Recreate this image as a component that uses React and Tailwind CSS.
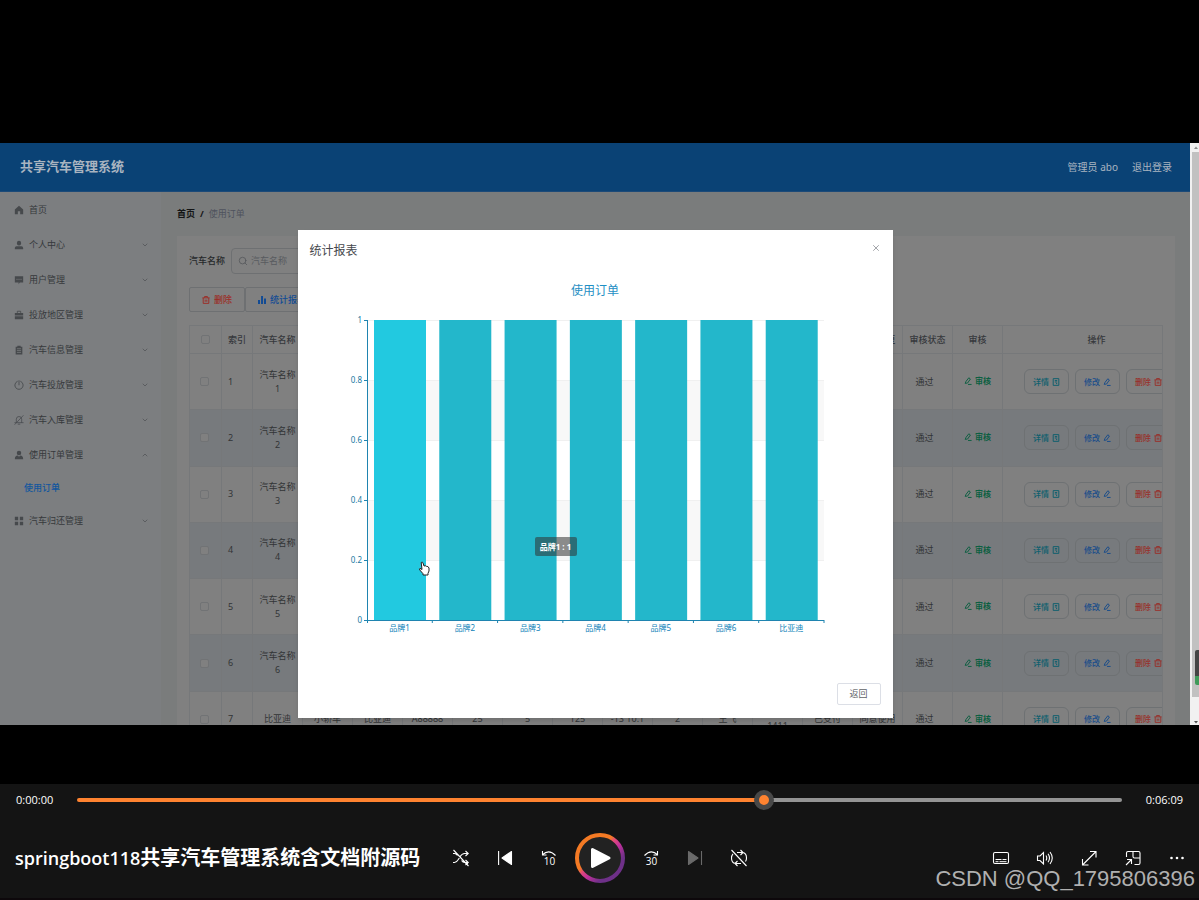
import { ChevronDown, ChevronUp, Search, X } from 'lucide-react';

const menuItems = [
  { label: '首页', icon: 'home' },
  { label: '个人中心', icon: 'user', arrow: true },
  { label: '用户管理', icon: 'chat', arrow: true },
  { label: '投放地区管理', icon: 'bag', arrow: true },
  { label: '汽车信息管理', icon: 'clipboard', arrow: true },
  { label: '汽车投放管理', icon: 'power', arrow: true },
  { label: '汽车入库管理', icon: 'bellOff', arrow: true },
  { label: '使用订单管理', icon: 'person', arrow: true, children: ['使用订单'] },
  { label: '汽车归还管理', icon: 'grid', arrow: true },
];

const menuIcons = {
  home: <path fill="currentColor" d="M6 1 1 5.5V11h3.6V7.500h2.800V11H11V5.500z" />,
  user: (
    <g fill="currentColor">
      <rect x="3.500" y="1" width="5" height="5.500" rx="2.400" />
      <path d="M1 11V9.500Q1 7.500 3 7.500h6q2 0 2 2V11z" />
    </g>
  ),
  chat: (
    <g>
      <path fill="currentColor" d="M1 1.500h10V9H7l-1.500 2V9H1z" />
      <path stroke="#7c7e80" strokeWidth="1.200" strokeDasharray="1.200 1.200" d="M3 5.200h6" />
    </g>
  ),
  bag: (
    <g>
      <path fill="none" stroke="currentColor" d="M4 3.500v-2h4v2" />
      <path fill="currentColor" d="M1 3.500h10v3H1zM1 7.500h10V11H1z" />
    </g>
  ),
  clipboard: (
    <g>
      <path fill="currentColor" d="M2 2h2V.8h4V2h2v9.500H2z" />
      <path stroke="#7c7e80" strokeWidth="0.900" d="M3.500 4.500h5M3.500 6.700h5M3.500 8.900h5" />
    </g>
  ),
  power: (
    <path fill="none" stroke="currentColor" strokeLinecap="round" d="M6 .8v5M4 1.600a5 5 0 1 0 4 0" />
  ),
  bellOff: (
    <g fill="none" stroke="currentColor" strokeWidth="0.900" strokeLinecap="round">
      <path d="M2.800 8.500V5a3.200 3.200 0 0 1 6.400 0v4M1 9.200h10M5 11h2M1 11.300 11 .7" />
    </g>
  ),
  person: (
    <g fill="currentColor">
      <circle cx="6" cy="3.500" r="2.700" />
      <path d="M1 11q0-4 3.500-4.300L6 8.200l1.500-1.500Q11 7 11 11z" />
    </g>
  ),
  grid: <path fill="currentColor" d="M1 1h4v4H1zM7 1h4v4H7zM1 7h4v4H1zM7 7h4v4H7z" />,
};

const columns = ['汽车名称', '', '', '', '', '', '', '', '', '', '', '', '审核回复', '审核状态', '审核'];

const emptyCells = ['', '', '', '', '', '', '', '', '', '', '', ''];

const rows = [
  { id: 1, name: '汽车名称1', cells: emptyCells },
  { id: 2, name: '汽车名称2', cells: emptyCells },
  { id: 3, name: '汽车名称3', cells: emptyCells },
  { id: 4, name: '汽车名称4', cells: emptyCells },
  { id: 5, name: '汽车名称5', cells: emptyCells },
  { id: 6, name: '汽车名称6', cells: emptyCells },
  {
    id: 7,
    name: '比亚迪',
    cells: ['小轿车', '比亚迪', 'A88888', '25', '5', '125', '-13 10:1', '2', '王飞', '\n1411', '已支付', '同意使用'],
  },
];

const chartData = [
  { name: '品牌1', value: 1 },
  { name: '品牌2', value: 1 },
  { name: '品牌3', value: 1 },
  { name: '品牌4', value: 1 },
  { name: '品牌5', value: 1 },
  { name: '品牌6', value: 1 },
  { name: '比亚迪', value: 1 },
];

const ticks = [0, 0.2, 0.4, 0.6, 0.8, 1];

function MenuIcon({ name }) {
  return (
    <svg viewBox="0 0 12 12" className="w-[10px] h-[10px] shrink-0 text-[#46494c]">
      {menuIcons[name]}
    </svg>
  );
}

function EditIcon() {
  return (
    <svg viewBox="0 0 10 10" className="w-2 h-2 shrink-0" fill="none" stroke="currentColor" strokeWidth="1.200">
      <path d="M1.500 8 2.500 5.500 6 1l2 1.500L4.500 7.500zM5 9.300h4.500" />
    </svg>
  );
}

function DocIcon() {
  return (
    <svg viewBox="0 0 10 10" className="w-2 h-2 shrink-0" fill="none" stroke="currentColor" strokeWidth="1.200">
      <path d="M1.500.8h7v8.400h-7zM3.500 3.200h3M3.500 5h3M5 7h1.500" />
    </svg>
  );
}

function TrashIcon() {
  return (
    <svg viewBox="0 0 10 10" className="w-2 h-2 shrink-0" fill="none" stroke="currentColor" strokeWidth="1.200">
      <path d="M.5 2.300h9M3.200 2V.7h3.600V2M1.500 2.500v6.700h7V2.500M4 4.500v2.700M6 4.500v2.700" />
    </svg>
  );
}

function Sidebar() {
  return (
    <nav className="w-[161px] shrink-0 bg-[#7c7e80] text-[9px] text-[#36393c]">
      {menuItems.map((item) => (
        <div key={item.label}>
          <a href="#" className="flex items-center gap-[5px] h-[35px] pl-[14px] pr-3">
            <MenuIcon name={item.icon} />
            <span className="flex-1">{item.label}</span>
            {item.arrow &&
              (item.children ? (
                <ChevronUp className="w-2 h-2 text-[#4a4d50]" />
              ) : (
                <ChevronDown className="w-2 h-2 text-[#4a4d50]" />
              ))}
          </a>
          {item.children?.map((child) => (
            <a key={child} href="#" className="flex items-center h-[31px] pl-6 text-[#12569e] font-medium">
              {child}
            </a>
          ))}
        </div>
      ))}
    </nav>
  );
}

function OrderTable() {
  return (
    <table className="w-full h-[423px] table-fixed border-collapse mt-[13px] text-[9px] leading-[14px] text-[#323436] text-center">
      <colgroup>
        <col className="w-8" />
        <col className="w-[31px]" />
        {columns.map((_, i) => (
          <col key={i} className="w-[50px]" />
        ))}
        <col />
      </colgroup>
      <thead>
        <tr className="h-7 text-[#36383c]">
          <th className="border border-[#76787a]">
            <input type="checkbox" aria-label="全选" className="block mx-auto w-[9px] h-[9px] appearance-none border border-[#717375] rounded-xs" />
          </th>
          <th className="border border-[#76787a] font-medium">索引</th>
          {columns.map((name, i) => (
            <th key={i} className="border border-[#76787a] font-medium whitespace-nowrap">
              {name}
            </th>
          ))}
          <th className="border border-[#76787a] font-medium pl-7">操作</th>
        </tr>
      </thead>
      <tbody>
        {rows.map((row) => (
          <tr key={row.id} className="even:bg-[#777a7d]">
            <td className="border border-[#76787a] pr-[2px]">
              <input
                type="checkbox"
                aria-label={`选择 ${row.id}`}
                className="block mx-auto w-[9px] h-[9px] appearance-none bg-[#808080] border border-[#717375] rounded-xs"
              />
            </td>
            <td className="border border-[#76787a] pl-[6px] text-left">{row.id}</td>
            <td className="border border-[#76787a] px-[6px] break-all">{row.name}</td>
            {row.cells.map((cell, i) => (
              <td key={i} className="border border-[#76787a] whitespace-pre">
                {cell}
              </td>
            ))}
            <td className="border border-[#76787a] pr-[6px]">通过</td>
            <td className="border border-[#76787a]">
              <button className="inline-flex items-center gap-[3px] text-[8px] font-bold text-[#0b5f41]">
                <EditIcon />
                审核
              </button>
            </td>
            <td className="border border-[#76787a] overflow-hidden">
              <div className="flex gap-[6px] pl-[21px] text-[8px] font-medium">
                <button className="flex items-center justify-center gap-[3px] w-[45px] h-[25px] shrink-0 border border-[#6e7173] rounded-md text-[#0e5f6e]">
                  详情
                  <DocIcon />
                </button>
                <button className="flex items-center justify-center gap-[3px] w-[45px] h-[25px] shrink-0 border border-[#6e7173] rounded-md text-[#184c8a]">
                  修改
                  <EditIcon />
                </button>
                <button className="flex items-center justify-center gap-[3px] w-[45px] h-[25px] shrink-0 border border-[#6e7173] rounded-md text-[#98302a]">
                  删除
                  <TrashIcon />
                </button>
              </div>
            </td>
          </tr>
        ))}
      </tbody>
    </table>
  );
}

function AdminPage() {
  return (
    <div className="flex flex-col h-full">
      <header className="flex items-center justify-between h-[49px] shrink-0 pl-5 pr-[18px] bg-[#0a4275] text-[#a9b4c0] border-b border-[#1c4a78]">
        <h1 className="text-[13px] font-bold">共享汽车管理系统</h1>
        <div className="flex items-center gap-[14px] text-[10px]">
          <span>管理员 abo</span>
          <button>退出登录</button>
        </div>
      </header>
      <div className="flex flex-1 min-h-0">
        <Sidebar />
        <main className="flex-1 min-w-0 pl-4 pr-[15px] bg-[#7a7c7c]">
          <div className="flex items-center gap-[5px] h-11 text-[9px]">
            <a href="#" className="font-bold text-[#141516]">首页</a>
            <span className="font-bold text-[#141516]">/</span>
            <span className="text-[#4e525c]">使用订单</span>
          </div>
          <section className="bg-[#808080] p-3">
            <div className="flex items-center gap-[6px] text-[9px]">
              <label htmlFor="car-name" className="font-medium text-[#26282a]">汽车名称</label>
              <div className="flex items-center gap-[3px] w-[130px] h-[26px] px-[6px] border border-[#6e7072] rounded-sm">
                <Search className="w-[10px] h-[10px] shrink-0 text-[#55585b]" />
                <input id="car-name" placeholder="汽车名称" className="w-full min-w-0 outline-none placeholder:text-[#585b5f]" />
              </div>
            </div>
            <div className="flex mt-[13px] text-[9px] font-medium">
              <button className="flex items-center justify-center gap-1 w-[56px] h-[25px] border border-[#6e7072] rounded-xs text-[#9c2c26]">
                <TrashIcon />
                删除
              </button>
              <button className="flex items-center justify-center gap-1 w-[74px] h-[25px] border border-[#6e7072] rounded-xs text-[#124b94]">
                <svg viewBox="0 0 10 10" className="w-2 h-2 shrink-0" fill="currentColor">
                  <path d="M0 5h2.500v5H0zM3.800 0h2.500v10H3.800zM7.500 3H10v7H7.500z" />
                </svg>
                统计报表
              </button>
            </div>
            <OrderTable />
          </section>
        </main>
      </div>
    </div>
  );
}

function BarChart() {
  const left = 69;
  const bottom = 350;
  const height = 300;
  const band = 457 / chartData.length;

  return (
    <svg viewBox="0 0 595 400" className="block w-full" fontFamily="Noto Sans, Noto Sans CJK SC, sans-serif">
      <text x="297" y="25" textAnchor="middle" fontSize="12" fill="#1f8fc4">使用订单</text>
      <rect x={left} y="110" width="457" height="60" fill="#f8f8f8" />
      <rect x={left} y="230" width="457" height="60" fill="#f8f8f8" />
      {ticks.map((tick) => {
        const y = bottom - tick * height;
        return (
          <g key={tick}>
            <path d={`M${left} ${y + 0.5}h457`} stroke="#f0f0f0" />
            <path d={`M${left - 3} ${y + 0.5}h4`} stroke="#1f84b0" />
            <text x={left - 5} y={y + 3} textAnchor="end" fontSize="8" fill="#17789f">{tick}</text>
          </g>
        );
      })}
      {chartData.map((item, i) => (
        <g key={item.name}>
          <rect
            x={left + band * i + 7}
            y={bottom - item.value * height}
            width="52"
            height={item.value * height}
            fill={i === 0 ? '#22c9e0' : '#23b7cb'}
          />
          <path d={`M${left + band * (i + 1)} ${bottom}v3`} stroke="#1f84b0" />
          <text x={left + band * (i + 0.5)} y={bottom + 11} textAnchor="middle" fontSize="8" fill="#0f82b8">
            {item.name}
          </text>
        </g>
      ))}
      <path d={`M${left + 0.5} 50V${bottom + 3}M${left} ${bottom + 0.5}h457`} fill="none" stroke="#1f84b0" />
    </svg>
  );
}

function ReportDialog() {
  return (
    <div role="dialog" aria-label="统计报表" className="w-1/2 mx-auto mt-[87px] bg-white shadow-md">
      <div className="flex items-center justify-between h-10 px-3">
        <h2 className="pt-[2px] text-[12px] text-[#45484d]">统计报表</h2>
        <button aria-label="关闭" className="pb-[5px]">
          <X className="w-[10px] h-[10px] text-[#909399]" />
        </button>
      </div>
      <div className="relative">
        <BarChart />
        {/* Tooltip of the hovered bar */}
        <div className="absolute left-[237px] top-[267px] flex items-center justify-center w-[42px] h-[19px] rounded-xs bg-[#323232]/55 text-white text-[8px] font-bold whitespace-nowrap">
          品牌1 : 1
        </div>
        <svg viewBox="0 0 12 15" className="absolute left-[120px] top-[291px] w-3 h-[15px]">
          <path
            d="M3.200 1.500q1-1 1.700.2L6 5l1.500-.2 1.200.6 1.200.1 1.100 1.500v3l-1 2.300v1.700H5v-1.300L1.800 9q-.8-1.500.2-1.700L4 8.500z"
            fill="#fff"
            stroke="#222"
            strokeLinejoin="round"
          />
        </svg>
      </div>
      <div className="flex justify-end py-[13px] pr-3">
        <button className="w-[44px] h-[22px] border border-[#dcdfe6] rounded-xs text-[9px] text-[#606266]">返回</button>
      </div>
    </div>
  );
}

function PageScrollbar() {
  return (
    <div className="relative flex flex-col items-center w-[9px] shrink-0 bg-[#f1f1f1]">
      <svg viewBox="0 0 8 9" className="w-2 h-[9px]">
        <path d="M3 6h4L5 3.500z" fill="#8a8a8a" />
      </svg>
      <div className="self-stretch flex-1 ml-[2px] bg-[#c1c1c1]" />
      <svg viewBox="0 0 8 28" className="w-2 h-7">
        <path d="M3 24h4l-2 2.500z" fill="#505050" />
      </svg>
      <div className="absolute right-0 bottom-[40px] w-1 h-[35px] rounded-l-xs bg-[#444] border-b-[9px] border-[#3f9a5a]" />
    </div>
  );
}

function Video() {
  return (
    <div className="flex h-[582px] overflow-hidden">
      <div className="relative flex-1 min-w-0 overflow-hidden">
        <AdminPage />
        <div className="absolute inset-0">
          <ReportDialog />
        </div>
      </div>
      <PageScrollbar />
    </div>
  );
}

function ControlButton({ label, children, dim }) {
  return (
    <button aria-label={label} className={`flex items-center justify-center w-11 h-11 ${dim ? 'text-[#6a6a6a]' : 'text-white'}`}>
      <svg viewBox="0 0 18 18" className="w-[18px] h-[18px]" fill="none" stroke="currentColor" strokeWidth="1.100">
        {children}
      </svg>
    </button>
  );
}

function Player() {
  const fill = '66%';

  return (
    <footer className="relative h-[116px] shrink-0 bg-[#141414] border-b-2 border-[#0d080b] text-white">
      <div className="flex items-center h-8 px-4 font-['Open_Sans',sans-serif] text-[11px]">
        <span className="w-[61px]">0:00:00</span>
        <input
          type="range"
          aria-label="播放进度"
          min="0"
          max="1000"
          defaultValue="660"
          style={{ '--fill': fill }}
          className="flex-1 min-w-0 h-5 appearance-none bg-transparent [&::-webkit-slider-runnable-track]:h-1 [&::-webkit-slider-runnable-track]:rounded-full [&::-webkit-slider-runnable-track]:bg-[linear-gradient(to_right,#ff8330_var(--fill),#949494_var(--fill))] [&::-webkit-slider-thumb]:appearance-none [&::-webkit-slider-thumb]:w-5 [&::-webkit-slider-thumb]:h-5 [&::-webkit-slider-thumb]:-mt-2 [&::-webkit-slider-thumb]:rounded-full [&::-webkit-slider-thumb]:border-[5px] [&::-webkit-slider-thumb]:border-[#484848] [&::-webkit-slider-thumb]:bg-[#ff8330]"
        />
        <span className="w-[61px] text-right">0:06:09</span>
      </div>
      <div className="grid grid-cols-[1fr_auto_1fr] items-center h-[84px]">
        <h2 className="pl-[15px] text-[18px] font-semibold whitespace-nowrap font-['Open_Sans','Noto_Sans_CJK_SC',sans-serif]">
          springboot118<span className="text-[20px] font-bold">共享汽车管理系统含文档附源码</span>
        </h2>
        <div className="flex items-center">
          <ControlButton label="随机播放">
            <path d="M1 13.500h1.500q2 0 4-3.300l1.500-2.400q2-3.300 4.500-3.300H16M13.500 2l2.700 2.500-2.700 2.500M1 4.500h1.500q1.500 0 3 1.800M9.500 11.500q1.500 2 3 2h3.500M13.500 11l2.700 2.500-2.700 2.500M1.500 1l15 16" />
          </ControlButton>
          <ControlButton label="上一个">
            <path d="M2.600 2v14" />
            <path d="M15.500 2.500v13L6 9z" fill="currentColor" strokeLinejoin="round" />
          </ControlButton>
          <ControlButton label="后退 10 秒">
            <path d="M2.500 2v4h4M2.500 5.700q6.500-6 13 .8" />
            <text x="9.500" y="16" textAnchor="middle" fontSize="10" fontFamily="Open Sans, sans-serif" fontWeight="500" fill="currentColor" stroke="none">10</text>
          </ControlButton>
          <button aria-label="播放" className="flex items-center justify-center w-[58px] h-[58px]">
            <svg viewBox="0 0 50 50" className="w-[50px] h-[50px]">
              <defs>
                <linearGradient id="ring" x1="0.150" y1="0.150" x2="0.850" y2="0.850">
                  <stop offset="0.350" stopColor="#f47a24" />
                  <stop offset="0.450" stopColor="#e0487c" />
                  <stop offset="0.600" stopColor="#c0309c" />
                  <stop offset="0.850" stopColor="#6e3088" />
                </linearGradient>
              </defs>
              <circle cx="25" cy="25" r="23" fill="#222" stroke="url(#ring)" strokeWidth="4" />
              <path d="M17.500 16.500v17L34 25z" fill="#fff" stroke="#fff" strokeWidth="3" strokeLinejoin="round" />
            </svg>
          </button>
          <ControlButton label="前进 30 秒">
            <path d="M15.500 2v4h-4M15.500 5.700q-6.500-6-13 .8" />
            <text x="9.500" y="16" textAnchor="middle" fontSize="10" fontFamily="Open Sans, sans-serif" fontWeight="500" fill="currentColor" stroke="none">30</text>
          </ControlButton>
          <ControlButton label="下一个" dim>
            <path d="M15.500 2v14" />
            <path d="M2.500 2.500v13L12 9z" fill="currentColor" strokeLinejoin="round" />
          </ControlButton>
          <ControlButton label="循环播放">
            <path d="M7 3.500h5.500q4 .5 4 5.500 0 2-1 3.500M10.500 1l2.500 2.500-2.500 2.500M11 14.500H5.500q-4-.5-4-5.500 0-2.500 1.500-4.200M7.500 12 5 14.500 7.500 17M1.500 1l15 16" />
          </ControlButton>
        </div>
        <div className="flex items-center justify-end">
          <ControlButton label="字幕">
            <rect x="1.500" y="3.500" width="15" height="11" rx="1.500" />
            <path d="M3.500 10.500h6M10.500 10.500h4M3.500 12.700h3M7.500 12.700h7" strokeWidth="1" />
          </ControlButton>
          <ControlButton label="音量">
            <path d="M1.500 7v4.500H4L7.500 15V3.500L4 7zM10 6.500q1.500 2.500 0 5M12 4.800q3 4.200 0 8.400M14 3q4.500 6 0 12" />
          </ControlButton>
          <ControlButton label="全屏">
            <path d="M10 2.500h6v6M16 2.500 2.500 16M2.500 10v6h6" />
          </ControlButton>
          <ControlButton label="迷你播放器">
            <path d="M2.500 8V4q0-1.500 1.500-1.500h10.500q1.500 0 1.500 1.500v10q0 1.500-1.500 1.500H10.500M9 2.500v5q0 1.500 1.500 1.500H16M3 10.500h4.500V15M7.500 10.500 2 16" />
          </ControlButton>
          <ControlButton label="更多">
            <g fill="currentColor" stroke="none">
              <circle cx="3.500" cy="9" r="1.300" />
              <circle cx="9" cy="9" r="1.300" />
              <circle cx="14.500" cy="9" r="1.300" />
            </g>
          </ControlButton>
        </div>
      </div>
      <div className="absolute right-1 bottom-[6px] font-['Liberation_Sans',sans-serif] text-[22px] leading-[26px] text-[#b0b0b0] pointer-events-none">
        CSDN @QQ_1795806396
      </div>
    </footer>
  );
}

export default function App() {
  return (
    <div className="flex flex-col min-h-screen overflow-hidden bg-black font-['Noto_Sans','Noto_Sans_CJK_SC',sans-serif]">
      <div className="flex-1 pt-[143px]">
        <Video />
      </div>
      <Player />
    </div>
  );
}
